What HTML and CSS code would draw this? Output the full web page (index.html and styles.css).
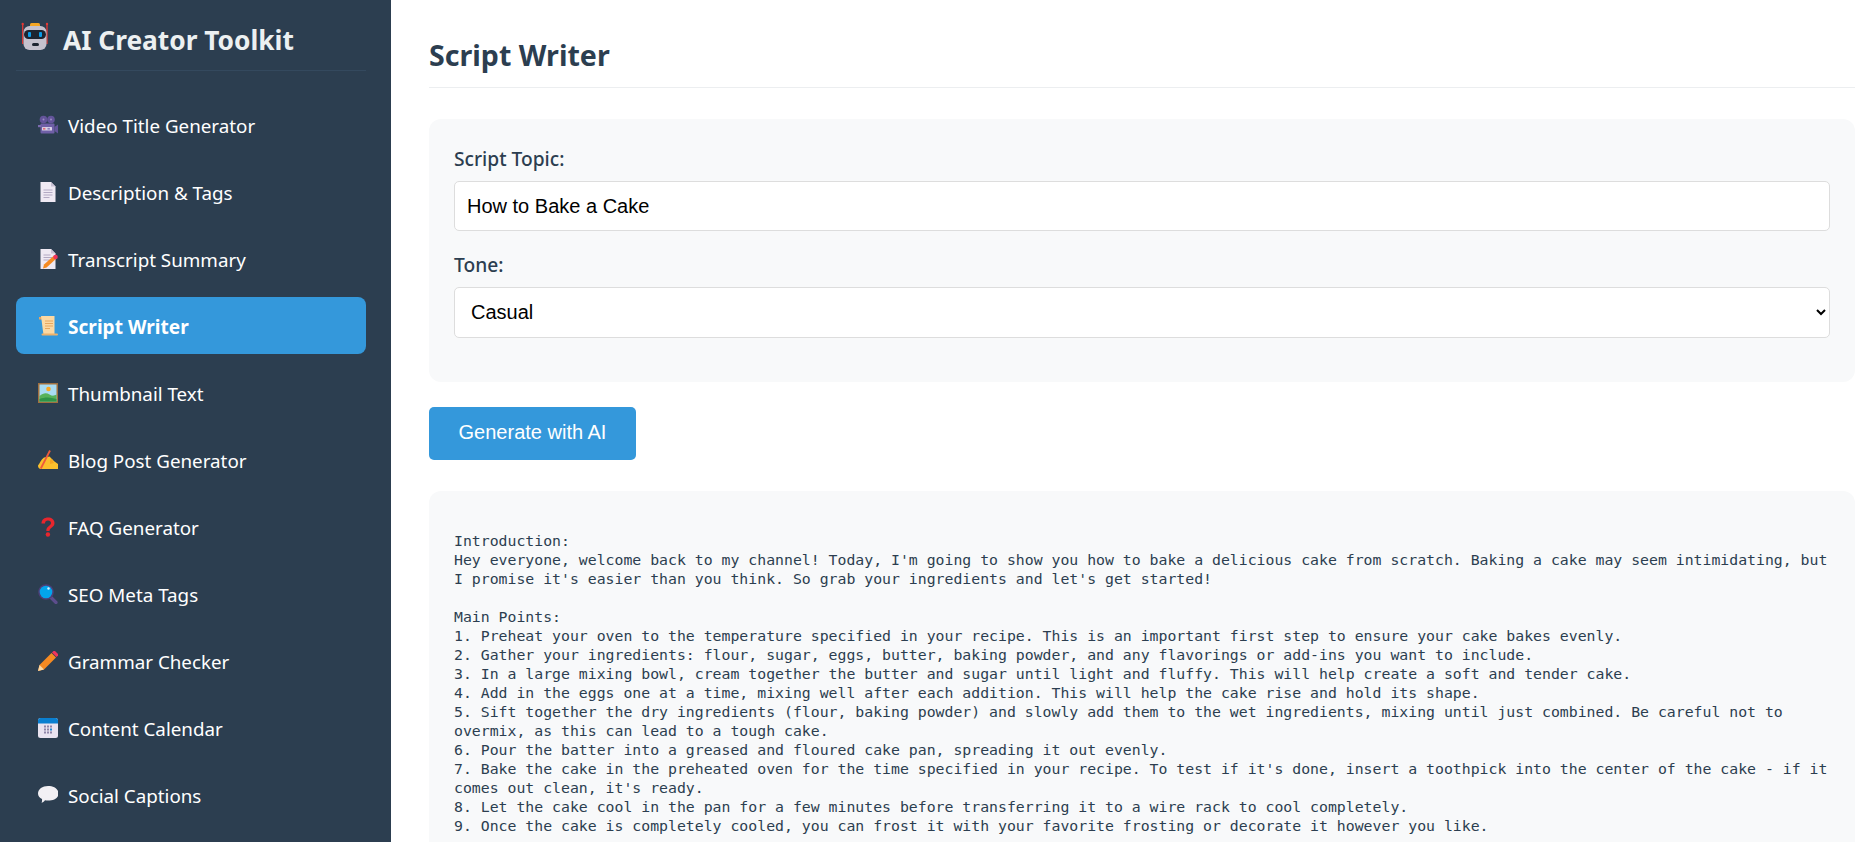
FILE: index.html
```html
<!DOCTYPE html>
<html lang="en">
<head>
<meta charset="utf-8">
<title>AI Creator Toolkit</title>
<link rel="stylesheet" href="styles.css">
</head>
<body>
<aside class="sidebar">
  <div class="brand">
    <svg class="brand-icon" viewBox="0 0 30 30" aria-hidden="true">
      <rect x="10" y="1" width="10" height="4" rx="1.5" fill="#f5a623"/>
      <path d="M2.7 2v20M27 2v20" stroke="#e53935" stroke-width="1.3"/>
      <circle cx="2.7" cy="2" r="1.2" fill="#e53935"/><circle cx="27" cy="2" r="1.2" fill="#e53935"/>
      <rect x="3.5" y="4" width="23" height="24" rx="6" fill="#c5c1cd"/>
      <rect x="4" y="8" width="22" height="9" rx="4.5" fill="#1d2430"/>
      <rect x="8" y="10" width="3" height="5" rx="1" fill="#0a9be8"/><rect x="19" y="10" width="3" height="5" rx="1" fill="#0a9be8"/>
      <rect x="12" y="21" width="7" height="3" rx="1.5" fill="#1d2430"/>
    </svg>
    <span>AI Creator Toolkit</span>
  </div>
  <nav class="nav">
    <a class="nav-item">
      <svg class="icon" viewBox="0 0 20 20" aria-hidden="true">
        <circle cx="5.500" cy="4.500" r="3.800" fill="#63549a"/><circle cx="13" cy="4.500" r="3.800" fill="#63549a"/>
        <circle cx="5.500" cy="4.500" r="1" fill="#9a8cc4"/><circle cx="13" cy="4.500" r="1" fill="#9a8cc4"/>
        <rect x="2.500" y="8.500" width="14" height="10" rx="1" fill="#6f5fa6"/>
        <rect x="0" y="10" width="3" height="2.200" fill="#7c6cb0"/>
        <path d="M16.500 12l3.500-2.500V18.500L16.500 16z" fill="#63549a"/>
        <rect x="4" y="12" width="10" height="3.500" rx=".5" fill="#d9d2e6"/>
        <rect x="5" y="12.900" width="2.400" height="1.700" fill="#e06a7b"/><rect x="9.500" y="12.900" width="2.400" height="1.700" fill="#8f81bd"/>
      </svg>
      <span>Video Title Generator</span>
    </a>
    <a class="nav-item">
      <svg class="icon" viewBox="0 0 20 20" aria-hidden="true">
        <path d="M2.500 0H13l4.500 4.500V20H2.500z" fill="#efe9f3"/>
        <path d="M13 0l4.500 4.500H13z" fill="#c9c1d4"/>
        <path d="M5.500 8h9M5.500 10.500h9M5.500 13h9M5.500 15.500h6" stroke="#b3a9c3" stroke-width="1"/>
      </svg>
      <span>Description &amp; Tags</span>
    </a>
    <a class="nav-item">
      <svg class="icon" viewBox="0 0 20 20" aria-hidden="true">
        <path d="M2.500 0H13l4.500 4.500V20H2.500z" fill="#efe9f3"/>
        <path d="M13 0l4.500 4.500H13z" fill="#c9c1d4"/>
        <path d="M5.500 6h7M5.500 8.500h9M5.500 11h6" stroke="#b3a9c3" stroke-width="1"/>
        <path d="M6 15.500L15.500 7l2.600 2.800L8.600 18.500 5 19.500z" fill="#f58a22"/>
        <circle cx="17.500" cy="8" r="2.300" fill="#f0345c"/>
      </svg>
      <span>Transcript Summary</span>
    </a>
    <a class="nav-item active">
      <svg class="icon" viewBox="0 0 20 20" aria-hidden="true">
        <path d="M1 1h3.500v2.500H1z" fill="#e8a75e"/>
        <path d="M3 0h13.500v19H5.500z" fill="#fbd9a4"/>
        <rect x="3.500" y="17.500" width="16.500" height="2" rx="1" fill="#eeb26b"/>
        <path d="M7 5h8M7 7.500h8M7 10h8M7 12.500h5" stroke="#e8a75e" stroke-width="1"/>
      </svg>
      <span>Script Writer</span>
    </a>
    <a class="nav-item">
      <svg class="icon" viewBox="0 0 20 20" aria-hidden="true">
        <rect x="0" y="0" width="20" height="20" fill="#a1703f"/>
        <rect x="1.500" y="1.500" width="17" height="17" fill="#a9dcf2"/>
        <circle cx="10.500" cy="6" r="2.300" fill="#f9a825"/>
        <path d="M1.500 13c4-3.500 7-3.500 10-1.500s5 1 7 0v7h-17z" fill="#57b25a"/>
        <path d="M1.500 16c5-2 11-2 17 0v2.500h-17z" fill="#2f9447"/>
      </svg>
      <span>Thumbnail Text</span>
    </a>
    <a class="nav-item">
      <svg class="icon" viewBox="0 0 20 20" aria-hidden="true">
        <path d="M0 15.500c2-2.500 3-6 6-8l5.500-1 5 5 3.500 2.500v5H3C1 19 0 17.500 0 15.500z" fill="#fbc02d"/>
        <path d="M12 10l2-1 2 4-4 1z" fill="#f5a623"/>
        <path d="M2.800 18.500L12 0.500" stroke="#ef5a3c" stroke-width="1.800"/>
      </svg>
      <span>Blog Post Generator</span>
    </a>
    <a class="nav-item">
      <svg class="icon" viewBox="0 0 20 20" aria-hidden="true">
        <path d="M3.500 6.500C3.500 2.500 6.500 0.500 10 0.500s6.500 2 6.500 5.500c0 4.500-5 4.500-5 8h-3.200c0-5 4.700-5 4.700-8 0-1.500-1.100-2.500-3-2.500S7 4.800 7 6.500z" fill="#e8262d"/>
        <circle cx="9.900" cy="17.500" r="2.200" fill="#e8262d"/>
      </svg>
      <span>FAQ Generator</span>
    </a>
    <a class="nav-item">
      <svg class="icon" viewBox="0 0 20 20" aria-hidden="true">
        <path d="M12.500 13l5.500 5.500" stroke="#5c4d8c" stroke-width="3.200" stroke-linecap="round"/>
        <circle cx="8" cy="8" r="7.800" fill="#4d3f78"/>
        <circle cx="8" cy="8" r="6.300" fill="#03a4ec"/>
        <circle cx="10.500" cy="4.500" r="1.200" fill="#d6f1fd"/>
      </svg>
      <span>SEO Meta Tags</span>
    </a>
    <a class="nav-item">
      <svg class="icon" viewBox="0 0 20 20" aria-hidden="true">
        <path d="M0 20l1.500-6L13.500 2l4.500 4.500L6 18.500z" fill="#f58a22"/>
        <path d="M0 20l1.500-6 4.500 4.500z" fill="#fcd9a6"/>
        <path d="M14 1.500L15.500 0q.8-.5 1.500 0L20 3q.5.700 0 1.500L18.500 6z" fill="#f0345c"/>
      </svg>
      <span>Grammar Checker</span>
    </a>
    <a class="nav-item">
      <svg class="icon" viewBox="0 0 20 20" aria-hidden="true">
        <rect width="20" height="20" rx="2.500" fill="#e9e3f0"/>
        <path d="M0 5.500V2.500A2.500 2.500 0 0 1 2.500 0h15A2.500 2.500 0 0 1 20 2.500v3z" fill="#0a7fd0"/>
        <path d="M6 7.500h2v2H6zM9 7.500h2v2H9zM12 7.500h2v2h-2zM6 10.500h2v2H6zM9 10.500h2v2H9zM6 13.500h2v2H6zM9 13.500h2v2H9zM12 13.500h2v2h-2z" fill="#8f85a8"/>
        <path d="M12 10.500h2v2h-2z" fill="#1b87d6"/>
      </svg>
      <span>Content Calendar</span>
    </a>
    <a class="nav-item">
      <svg class="icon" viewBox="0 0 20 20" aria-hidden="true">
        <path d="M10 1c6 0 10.500 3 10.500 7.500S16 15.500 10 15.500c-1 0-2 0-3-.3C6 16.500 4.500 17.500 3.500 17.800c.5-1 .7-2.300.5-3.700C1.500 13 0 11 0 8.500 0 4 4.500 1 10 1z" fill="#f2f0f4"/>
      </svg>
      <span>Social Captions</span>
    </a>
  </nav>
</aside>
<main class="main">
  <h1 class="page-title">Script Writer</h1>
  <section class="panel form">
    <label class="label" for="topic">Script Topic:</label>
    <input class="field" id="topic" type="text" value="How to Bake a Cake">
    <label class="label" for="tone">Tone:</label>
    <select class="field select" id="tone"><option>Casual</option></select>
  </section>
  <button class="generate" type="button">Generate with AI</button>
  <section class="panel output"><pre class="output-text">

Introduction:
Hey everyone, welcome back to my channel! Today, I'm going to show you how to bake a delicious cake from scratch. Baking a cake may seem intimidating, but I promise it's easier than you think. So grab your ingredients and let's get started!

Main Points:
1. Preheat your oven to the temperature specified in your recipe. This is an important first step to ensure your cake bakes evenly.
2. Gather your ingredients: flour, sugar, eggs, butter, baking powder, and any flavorings or add-ins you want to include.
3. In a large mixing bowl, cream together the butter and sugar until light and fluffy. This will help create a soft and tender cake.
4. Add in the eggs one at a time, mixing well after each addition. This will help the cake rise and hold its shape.
5. Sift together the dry ingredients (flour, baking powder) and slowly add them to the wet ingredients, mixing until just combined. Be careful not to overmix, as this can lead to a tough cake.
6. Pour the batter into a greased and floured cake pan, spreading it out evenly.
7. Bake the cake in the preheated oven for the time specified in your recipe. To test if it's done, insert a toothpick into the center of the cake - if it comes out clean, it's ready.
8. Let the cake cool in the pan for a few minutes before transferring it to a wire rack to cool completely.
9. Once the cake is completely cooled, you can frost it with your favorite frosting or decorate it however you like.
</pre></section>
</main>
</body>
</html>
```

FILE: styles.css
```css
* { box-sizing: border-box; }
html, body { height: 100%; }
body {
  margin: 0;
  display: flex;
  overflow: hidden;
  background: #fff;
  color: #2c3e50;
  font-family: "Noto Sans", "Open Sans", sans-serif;
}
.sidebar {
  flex: 0 0 391px;
  height: 100vh;
  padding: 0 25px 0 16px;
  background: #2c3e50;
  color: #ecf0f1;
  overflow: hidden;
}
.brand {
  display: flex;
  align-items: center;
  gap: 13px;
  height: 71px;
  padding: 10px 0 0 4px;
  border-bottom: 1px solid #34495e;
  font-size: 26.3px;
  font-weight: 700;
}
.brand-icon { width: 30px; height: 30px; flex: none; margin-top: -6px; }
.nav { display: flex; flex-direction: column; gap: 10px; margin-top: 25px; }
.nav-item {
  display: flex;
  align-items: center;
  gap: 10px;
  height: 57px;
  padding: 0 22px;
  border-radius: 8px;
  color: #fff;
  font-size: 18.8px;
}
.nav-item span { padding-top: 2px; }
.nav-item.active { background: #3498db; font-size: 19.1px; font-weight: 700; }
.icon { width: 20px; height: 20px; flex: none; }
.main {
  flex: 1;
  min-width: 0;
  height: 100vh;
  padding: 0 7px 0 38px;
  overflow: hidden;
}
.page-title {
  margin: 0 0 31px;
  height: 88px;
  padding-top: 35px;
  border-bottom: 1px solid #eceef0;
  font-size: 28.6px;
  line-height: 40px;
  font-weight: 700;
}
.panel { background: #f8f9fa; border-radius: 12px; }
.form { height: 263px; padding: 25px 25px 0; }
.label { display: block; height: 37px; font-size: 19.2px; line-height: 30px; font-weight: 500; }
.field {
  display: block;
  width: 100%;
  height: 50px;
  margin-bottom: 19px;
  padding: 0 12px;
  background: #fff;
  border: 1px solid #ddd;
  border-radius: 5px;
  color: #000;
  font-family: "Liberation Sans", Arial, sans-serif;
  font-size: 20px;
}
.select { height: 51px; padding-bottom: 2px; }
.generate {
  display: block;
  width: 207px;
  height: 53px;
  margin: 25px 0 31px;
  padding: 0 0 2px;
  background: #3498db;
  border: 0;
  border-radius: 5px;
  color: #fff;
  font-family: "Liberation Sans", Arial, sans-serif;
  font-size: 20px;
}
.output { padding: 21px 25px 24px; }
.output-text {
  margin: 0;
  white-space: pre-wrap;
  color: #2c3e50;
  font-family: "DejaVu Sans Mono", monospace;
  font-size: 14.82px;
  line-height: 19px;
}
```
